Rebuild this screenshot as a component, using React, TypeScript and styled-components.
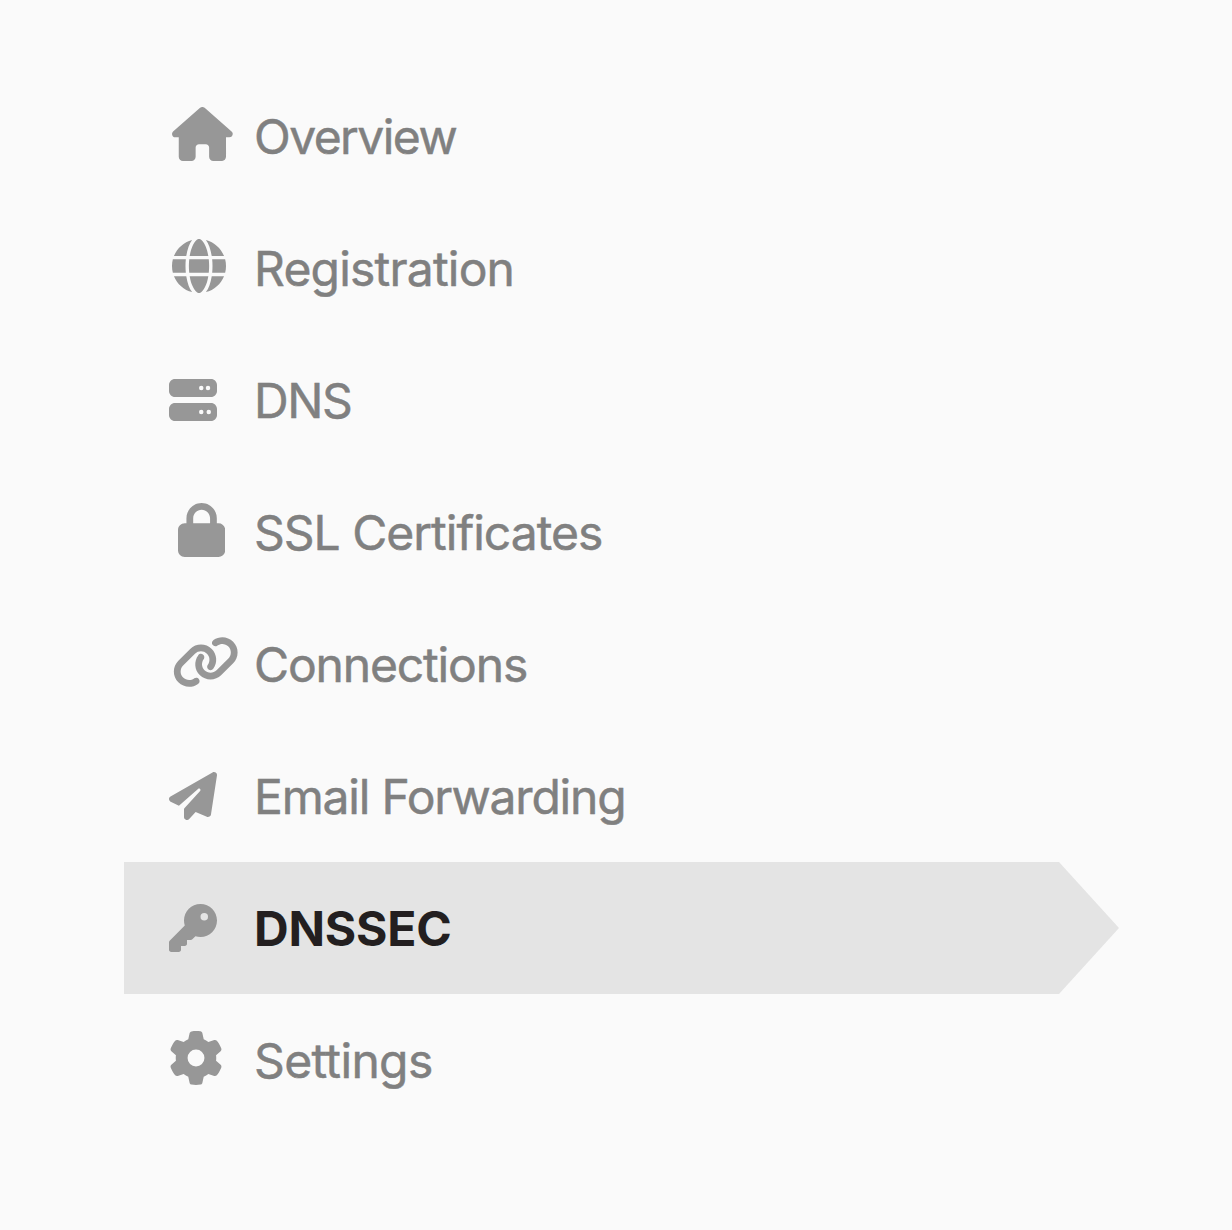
import React from "react";
import styled, { createGlobalStyle } from "styled-components";
import type { IconType } from "react-icons";
import { FaHouse, FaGlobe, FaServer, FaLock, FaLink, FaPaperPlane, FaKey, FaGear } from "react-icons/fa6";

const GlobalStyle = createGlobalStyle`
  *, *::before, *::after { box-sizing: border-box; }
  body { margin: 0; background: #fafafa; }
`;

const Page = styled.main`
  min-height: 1230px;
  padding: 70px 113px 0 124px;
  background: #fafafa;
  font-family: Inter, "Liberation Sans", sans-serif;
`;

const Menu = styled.nav`
  display: flex;
  flex-direction: column;
`;

const Item = styled.a<{ $active?: boolean }>`
  display: grid;
  grid-template-columns: 85px 1fr;
  align-items: center;
  height: 132px;
  padding-left: 45px;
  text-decoration: none;
  color: ${(p) => (p.$active ? "#231f20" : "#808080")};
  font-weight: ${(p) => (p.$active ? 700 : 400)};
  -webkit-text-stroke: ${(p) => (p.$active ? 0 : 0.5)}px currentColor;
  background: ${(p) => (p.$active ? "#e4e4e4" : "transparent")};
  clip-path: ${(p) =>
    p.$active ? "polygon(0 0, calc(100% - 60px) 0, 100% 50%, calc(100% - 60px) 100%, 0 100%)" : "none"};
`;

const IconSlot = styled.span<{ $width: number; $height: number; $indent: number }>`
  display: flex;
  padding-left: ${(p) => p.$indent}px;
  padding-bottom: ${(p) => (p.$height === 54 ? 4 : 0)}px;
  color: #979797;

  svg {
    width: ${(p) => p.$width}px;
    height: ${(p) => p.$height}px;
    flex: none;
  }
`;

const Label = styled.span<{ $tracking: number }>`
  padding-top: 2px;
  font-size: 48px;
  line-height: 60px;
  letter-spacing: ${(p) => p.$tracking}px;
  white-space: nowrap;
`;

interface Entry {
  label: string;
  icon: IconType;
  width: number;
  height: number;
  indent: number;
  tracking: number;
  active?: boolean;
}

const entries: Entry[] = [
  { label: "Overview", icon: FaHouse, width: 60.75, height: 54, indent: 3, tracking: -1.55 },
  { label: "Registration", icon: FaGlobe, width: 54, height: 54, indent: 3, tracking: -0.8 },
  { label: "DNS", icon: FaServer, width: 48, height: 48, indent: 0, tracking: -1.4 },
  { label: "SSL Certificates", icon: FaLock, width: 47.25, height: 54, indent: 9, tracking: -1 },
  { label: "Connections", icon: FaLink, width: 67.5, height: 54, indent: 3, tracking: -1.15 },
  { label: "Email Forwarding", icon: FaPaperPlane, width: 48, height: 48, indent: 0, tracking: -1.2 },
  { label: "DNSSEC", icon: FaKey, width: 48, height: 48, indent: 0, tracking: -0.2, active: true },
  { label: "Settings", icon: FaGear, width: 54, height: 54, indent: 0, tracking: -0.65 },
];

export default function App() {
  return (
    <>
      <GlobalStyle />
      <Page>
        <Menu>
          {entries.map(({ label, icon: Icon, width, height, indent, tracking, active }) => (
            <Item key={label} $active={active} aria-current={active ? "page" : undefined}>
              <IconSlot $width={width} $height={height} $indent={indent}>
                <Icon aria-hidden />
              </IconSlot>
              <Label $tracking={tracking}>{label}</Label>
            </Item>
          ))}
        </Menu>
      </Page>
    </>
  );
}
